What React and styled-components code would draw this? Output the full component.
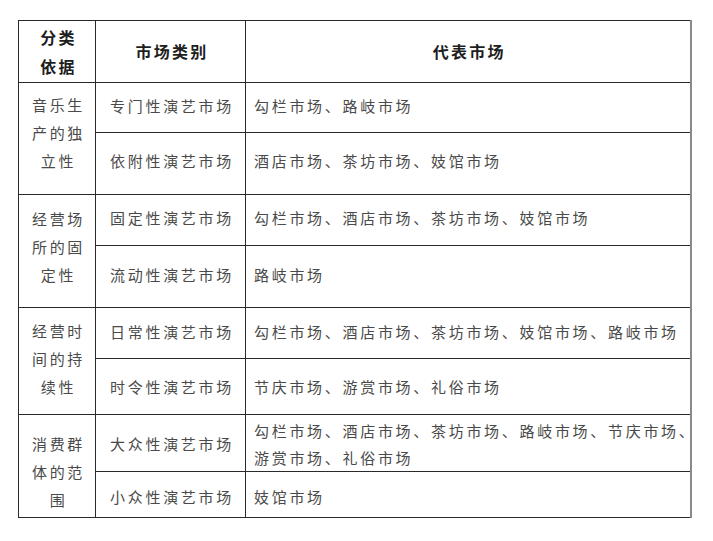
import React from "react";
import styled, { createGlobalStyle } from "styled-components";

const Global = createGlobalStyle`
  html, body { margin: 0; padding: 0; background: #ffffff; }
  body { font-family: "Noto Sans CJK SC", "Noto Sans", sans-serif; }
`;

const Page = styled.div`
  padding: 20px 0 0 18px;
`;

const Table = styled.table`
  border-collapse: collapse;
  table-layout: fixed;
  width: 672px;
  border-right: 2px solid #8a8a8a;
`;

const Col = styled.col`
  width: ${(p) => p.$w}px;
`;

const Row = styled.tr`
  height: ${(p) => p.$h}px;
`;

const Head = styled.th`
  border: 1px solid #2a2a2a;
  font-size: 16px;
  font-weight: 700;
  letter-spacing: 2.2px;
  line-height: 29px;
  color: #1e1e1e;
  text-align: center;
  vertical-align: middle;
  padding: 0 0 0 3px;
`;

const Group = styled.td`
  border: 1px solid #2a2a2a;
  font-size: 15px;
  letter-spacing: 2.7px;
  line-height: 28px;
  color: #4a4a4a;
  text-align: center;
  vertical-align: middle;
  padding: ${(p) => p.$pt || 0}px 0 ${(p) => p.$pb || 0}px 3px;
`;

const Kind = styled.td`
  border: 1px solid #2a2a2a;
  font-size: 15px;
  letter-spacing: 2.7px;
  line-height: 27px;
  color: #4a4a4a;
  text-align: center;
  vertical-align: middle;
  padding: ${(p) => p.$pt || 0}px 0 ${(p) => p.$pb || 0}px 3px;
`;

const Markets = styled.td`
  border: 1px solid #2a2a2a;
  font-size: 15px;
  letter-spacing: 2.7px;
  line-height: 27px;
  color: #4a4a4a;
  text-align: left;
  vertical-align: middle;
  padding: ${(p) => p.$pt || 0}px 0 ${(p) => p.$pb || 0}px 8px;
  white-space: nowrap;
`;

const groups = [
  {
    name: ["音乐生", "产的独", "立性"],
    pb: 11,
    rows: [
      { h: 50, kind: "专门性演艺市场", m: ["勾栏市场、路岐市场"], pb: 5 },
      { h: 62, kind: "依附性演艺市场", m: ["酒店市场、茶坊市场、妓馆市场"], pb: 6 },
    ],
  },
  {
    name: ["经营场", "所的固", "定性"],
    pb: 9,
    rows: [
      { h: 51, kind: "固定性演艺市场", m: ["勾栏市场、酒店市场、茶坊市场、妓馆市场"], pb: 5 },
      { h: 62, kind: "流动性演艺市场", m: ["路岐市场"], pb: 4 },
    ],
  },
  {
    name: ["经营时", "间的持", "续性"],
    pb: 4,
    rows: [
      { h: 51, kind: "日常性演艺市场", m: ["勾栏市场、酒店市场、茶坊市场、妓馆市场、路岐市场"], pb: 4 },
      { h: 56, kind: "时令性演艺市场", m: ["节庆市场、游赏市场、礼俗市场"] },
    ],
  },
  {
    name: ["消费群", "体的范", "围"],
    pt: 11,
    rows: [
      {
        h: 57,
        kind: "大众性演艺市场",
        m: ["勾栏市场、酒店市场、茶坊市场、路岐市场、节庆市场、", "游赏市场、礼俗市场"],
        pt: 1,
      },
      { h: 46, kind: "小众性演艺市场", m: ["妓馆市场"], pt: 4 },
    ],
  },
];

const Lines = ({ lines }) =>
  lines.map((l, i) => (
    <React.Fragment key={i}>
      {i > 0 && <br />}
      {l}
    </React.Fragment>
  ));

export default function App() {
  return (
    <>
      <Global />
      <Page>
        <Table>
          <colgroup>
            <Col $w={77} />
            <Col $w={150} />
            <Col $w={445} />
          </colgroup>
          <thead>
            <Row $h={62}>
              <Head>
                <Lines lines={["分类", "依据"]} />
              </Head>
              <Head>市场类别</Head>
              <Head>代表市场</Head>
            </Row>
          </thead>
          <tbody>
            {groups.map((g, gi) =>
              g.rows.map((r, ri) => (
                <Row $h={r.h} key={`${gi}-${ri}`}>
                  {ri === 0 && (
                    <Group rowSpan={g.rows.length} $pt={g.pt} $pb={g.pb}>
                      <Lines lines={g.name} />
                    </Group>
                  )}
                  <Kind $pt={r.pt} $pb={r.pb}>{r.kind}</Kind>
                  <Markets $pt={r.pt} $pb={r.pb}>
                    <Lines lines={r.m} />
                  </Markets>
                </Row>
              ))
            )}
          </tbody>
        </Table>
      </Page>
    </>
  );
}
